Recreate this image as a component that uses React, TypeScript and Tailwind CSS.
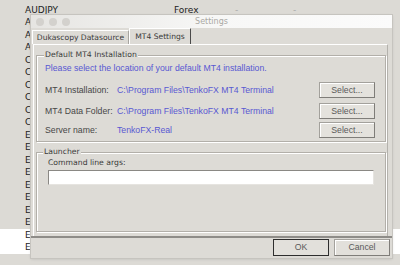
import React from "react";

const rows = [
  "AUDJPY", "AUDNZD", "AUDUSD", "AUDCAD",
  "CADCHF", "CADJPY", "CADHKD", "CHFJPY", "CHFSGD", "CHFPLN",
  "EURAUD", "EURCAD", "EURCHF", "EURGBP", "EURJPY", "EURNOK", "EURNZD", "EURSEK", "EURUSD", "EURTRY",
];

function SelectButton() {
  return (
    <button className="w-[56px] h-[16px] flex items-center justify-center bg-[#e4e2dd] border border-[#a3a19c] border-r-[#7f7d79] border-b-[#7f7d79] shadow-[inset_1px_1px_0_#ffffff] text-[8.7px] leading-none text-[#5a5a5a] [font-family:'Liberation_Sans',Arial,sans-serif]">
      Select...
    </button>
  );
}

function Row({ label, value, mt }: { label: string; value: string; mt: string }) {
  return (
    <div className={`flex items-center h-[16px] ${mt}`}>
      <div className="w-[80px] pl-[8px] text-[8.7px] leading-none text-[#474747]">{label}</div>
      <div className="flex-1 text-[8.7px] leading-none text-[#5858d2]">{value}</div>
      <div className="mr-[10px]">
        <SelectButton />
      </div>
    </div>
  );
}

export default function App() {
  return (
    <div className="relative w-[400px] h-[265px] overflow-hidden bg-[#dcdad5] [font-family:'DejaVu_Sans',sans-serif]">
      {/* background list */}
      <div className="flex flex-col pt-[4px]">
        {rows.map((r, i) => (
          <div
            key={r}
            className={`h-[12.5px] flex items-center text-[9px] leading-none text-[#222222] ${i >= 18 ? "bg-white" : ""}`}
          >
            {i === 0 ? (
              <>
                <div className="w-[174px] pl-[25px]">{r}</div>
                <div className="w-[61px]">Forex</div>
                <div className="w-[58px] text-[#aaaaaa]">-</div>
                <div className="text-[#aaaaaa]">-</div>
              </>
            ) : (
              <div className="w-[31px] pl-[25px] overflow-hidden whitespace-nowrap">{r}</div>
            )}
          </div>
        ))}
      </div>

      {/* dialog window */}
      <div className="absolute left-[31px] top-[15px] w-[361px] h-[243px] flex flex-col bg-[#dddbd6] shadow-[0_0_0_1px_#c6c4bf,0_1px_3px_rgba(0,0,0,0.15)]">
        {/* title bar */}
        <div className="relative h-[13px] flex items-center justify-center bg-gradient-to-r from-[#e6e5e2] via-[#f7f7f6] to-[#fbfbfb]">
          <div className="absolute left-[5px] top-[3px] flex gap-[5px]">
            <div className="w-[8px] h-[8px] rounded-full bg-[#d3d1cd]" />
            <div className="w-[8px] h-[8px] rounded-full bg-[#d3d1cd]" />
            <div className="w-[8px] h-[8px] rounded-full bg-[#d3d1cd]" />
          </div>
          <span className="text-[8px] leading-none text-[#aaa8a4]">Settings</span>
        </div>

        {/* tabs */}
        <div className="h-[16px] flex items-end pl-[1px]">
          <div className="w-[97px] h-[14px] flex items-center justify-center border-t border-l border-white border-r border-r-[#a7a5a0] text-[7.6px] leading-none text-[#3a3a3a]">
            Dukascopy Datasource
          </div>
          <div className="w-[62px] h-[16px] flex items-center justify-center border-t border-l border-white border-r border-r-[#4a4a4a] text-[7.6px] leading-none text-[#3a3a3a]">
            MT4 Settings
          </div>
        </div>

        {/* tab panel */}
        <div className="ml-[2px] mr-[4px] h-[192px] flex flex-col border-t border-l border-white border-r border-r-[#b4b2ad] pl-[2px]">
          {/* Default MT4 installation group */}
          <div className="relative mt-[10px] w-[350px] h-[87px] border border-[#b2afa9] shadow-[1px_1px_0_#ffffff,inset_1px_1px_0_#ffffff] [font-family:'Liberation_Sans',Arial,sans-serif]">
            <div className="absolute left-[7px] -top-[6px] px-[1px] h-[10px] flex items-center bg-[#dddbd6] text-[7.7px] leading-none text-[#3a3a3a] [font-family:'DejaVu_Sans',sans-serif]">
              Default MT4 Installation
            </div>
            <div className="pt-[6px] h-[18px] flex items-end">
              <div className="pl-[8px] h-[12px] flex items-center text-[8.7px] leading-none text-[#5858d2]">
                Please select the location of your default MT4 installation.
              </div>
            </div>
            <Row mt="mt-[8px]" label="MT4 Installation:" value="C:\Program Files\TenkoFX MT4 Terminal" />
            <Row mt="mt-[5px]" label="MT4 Data Folder:" value="C:\Program Files\TenkoFX MT4 Terminal" />
            <Row mt="mt-[3px]" label="Server name:" value="TenkoFX-Real" />
          </div>

          {/* Launcher group */}
          <div className="relative mt-[10px] w-[350px] h-[80px] border border-[#b2afa9] shadow-[1px_1px_0_#ffffff,inset_1px_1px_0_#ffffff]">
            <div className="absolute left-[6px] -top-[6px] px-[1px] h-[10px] flex items-center bg-[#dddbd6] text-[7.7px] leading-none text-[#3a3a3a]">
              Launcher
            </div>
            <div className="pt-[5px] pl-[11px]">
              <div className="h-[10px] flex items-center text-[7.7px] leading-none text-[#3a3a3a]">
                Command line args:
              </div>
              <div className="mt-[2px] w-[326px] h-[15px] bg-white border border-[#8a8884] border-r-[#e6e4e0] border-b-[#e6e4e0]" />
            </div>
          </div>
        </div>

        {/* separator */}
        <div className="h-[2px] bg-[#8e8c88]" />

        {/* bottom buttons */}
        <div className="mt-[1px] h-[17px] flex justify-end gap-[5px] pr-[2px] [font-family:'Liberation_Sans',Arial,sans-serif]">
          <button className="w-[56px] h-[17px] flex items-center justify-center bg-[#e2e0db] border border-[#2e2e2e] border-r-[1.5px] border-b-[1.5px] text-[8.7px] leading-none text-[#5a5a5a]">
            OK
          </button>
          <button className="w-[56px] h-[17px] flex items-center justify-center bg-[#e2e0db] border border-[#a3a19c] border-r-[#7f7d79] border-b-[#7f7d79] shadow-[inset_1px_1px_0_#ffffff] text-[8.7px] leading-none text-[#5a5a5a]">
            Cancel
          </button>
        </div>
      </div>
    </div>
  );
}
